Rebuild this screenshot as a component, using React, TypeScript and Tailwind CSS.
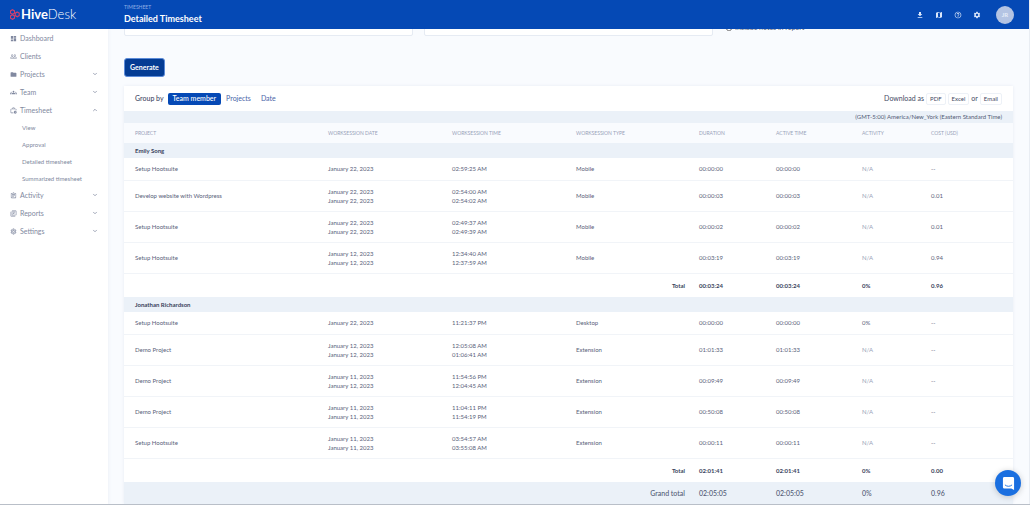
import { Fragment } from 'react'
import {
  MdDashboard,
  MdPeopleOutline,
  MdFolder,
  MdGroups,
  MdOutlineWorkHistory,
  MdOutlineAssignment,
  MdOutlineLibraryBooks,
  MdOutlineSettings,
  MdDownload,
  MdMap,
  MdHelpOutline,
  MdSettings,
} from 'react-icons/md'
import { ChevronDown, ChevronUp } from 'lucide-react'

const navItems = [
  { label: 'Dashboard', icon: MdDashboard },
  { label: 'Clients', icon: MdPeopleOutline },
  { label: 'Projects', icon: MdFolder, chevron: 'down' },
  { label: 'Team', icon: MdGroups, chevron: 'down' },
  {
    label: 'Timesheet',
    icon: MdOutlineWorkHistory,
    chevron: 'up',
    children: ['View', 'Approval', 'Detailed timesheet', 'Summarized timesheet'],
  },
  { label: 'Activity', icon: MdOutlineAssignment, chevron: 'down' },
  { label: 'Reports', icon: MdOutlineLibraryBooks, chevron: 'down' },
  { label: 'Settings', icon: MdOutlineSettings, chevron: 'down' },
]

const columns = [
  { label: 'Project', width: 'w-[193px]' },
  { label: 'Worksession date', width: 'w-[124px]' },
  { label: 'Worksession time', width: 'w-[124px]' },
  { label: 'Worksession type', width: 'w-[123px]' },
  { label: 'Duration', width: 'w-[77px]' },
  { label: 'Active time', width: 'w-[86px]' },
  { label: 'Activity', width: 'w-[69px]' },
  { label: 'Cost (USD)', width: 'w-[93px]' },
]

const groups = [
  {
    name: 'Emily Song',
    rows: [
      { project: 'Setup Hootsuite', dates: ['January 22, 2023'], times: ['02:59:25 AM'], type: 'Mobile', duration: '00:00:00', activity: 'N/A', cost: '--' },
      { project: 'Develop website with Wordpress', dates: ['January 22, 2023', 'January 22, 2023'], times: ['02:54:00 AM', '02:54:02 AM'], type: 'Mobile', duration: '00:00:03', activity: 'N/A', cost: '0.01' },
      { project: 'Setup Hootsuite', dates: ['January 22, 2023', 'January 22, 2023'], times: ['02:49:37 AM', '02:49:39 AM'], type: 'Mobile', duration: '00:00:02', activity: 'N/A', cost: '0.01' },
      { project: 'Setup Hootsuite', dates: ['January 12, 2023', 'January 12, 2023'], times: ['12:34:40 AM', '12:37:59 AM'], type: 'Mobile', duration: '00:03:19', activity: 'N/A', cost: '0.94' },
    ],
    total: { duration: '00:03:24', activity: '0%', cost: '0.96' },
  },
  {
    name: 'Jonathan Richardson',
    rows: [
      { project: 'Setup Hootsuite', dates: ['January 22, 2023'], times: ['11:21:37 PM'], type: 'Desktop', duration: '00:00:00', activity: '0%', cost: '--' },
      { project: 'Demo Project', dates: ['January 12, 2023', 'January 12, 2023'], times: ['12:05:08 AM', '01:06:41 AM'], type: 'Extension', duration: '01:01:33', activity: 'N/A', cost: '--' },
      { project: 'Demo Project', dates: ['January 11, 2023', 'January 12, 2023'], times: ['11:54:56 PM', '12:04:45 AM'], type: 'Extension', duration: '00:09:49', activity: 'N/A', cost: '--' },
      { project: 'Demo Project', dates: ['January 11, 2023', 'January 11, 2023'], times: ['11:04:11 PM', '11:54:19 PM'], type: 'Extension', duration: '00:50:08', activity: 'N/A', cost: '--' },
      { project: 'Setup Hootsuite', dates: ['January 11, 2023', 'January 11, 2023'], times: ['03:54:57 AM', '03:55:08 AM'], type: 'Extension', duration: '00:00:11', activity: 'N/A', cost: '--' },
    ],
    total: { duration: '02:01:41', activity: '0%', cost: '0.00' },
  },
]

function Logo() {
  return (
    <a href="#" className="flex w-[124px] shrink-0 items-center gap-px pl-2.5 text-[13px] leading-none text-white">
      <svg viewBox="0 0 20 22" className="h-[11px] w-[10px]" fill="none" stroke="#d5406b" strokeWidth="2.2">
        <path d="M5 1.5l4 2.3v4.6L5 10.7 1 8.4V3.8z" />
        <path d="M5 11.5l4 2.3v4.6L5 20.7l-4-2.3v-4.6z" />
        <path d="M14.5 6l4 2.3v4.9l-4 2.3-4-2.3V8.3z" />
      </svg>
      <span>
        <span className="font-bold">Hive</span>
        <span className="font-light">Desk</span>
      </span>
    </a>
  )
}

function Header() {
  return (
    <header className="relative z-10 flex h-[29px] shrink-0 items-center bg-[#0549b5] text-white">
      <Logo />
      <div className="flex-1">
        <p className="text-[5px] leading-[7px] text-[#8fb0e6] uppercase">Timesheet</p>
        <h1 className="mt-0.5 text-[9px] leading-[12px] font-bold">Detailed Timesheet</h1>
      </div>
      <div className="flex items-center gap-[11px] pr-[15px] text-[8px] text-[#dbe7fb]">
        <button aria-label="Downloads"><MdDownload /></button>
        <button aria-label="Guide"><MdMap /></button>
        <button aria-label="Help"><MdHelpOutline /></button>
        <button aria-label="Settings"><MdSettings /></button>
        <button className="ml-1 size-[18px] rounded-full bg-[#b4c4e3] text-[6px] font-bold text-[#e6edf8]">JR</button>
      </div>
    </header>
  )
}

function Sidebar() {
  return (
    <nav className="w-[108px] shrink-0 bg-white text-[7px] text-[#8189a0] shadow-[0_0_4px_#e8ecf4]">
      <ul>
        {navItems.map(({ label, icon: Icon, chevron, children }) => (
          <li key={label}>
            <a href="#" className="flex h-[18px] items-center pr-2.5 pl-2.5">
              <Icon className="mr-[3px] size-[7px]" />
              <span className="flex-1">{label}</span>
              {chevron === 'down' && <ChevronDown className="size-[6px]" strokeWidth={3} />}
              {chevron === 'up' && <ChevronUp className="size-[6px]" strokeWidth={3} />}
            </a>
            {children && (
              <ul className="-mb-px text-[6px]">
                {children.map((child) => (
                  <li key={child}>
                    <a href="#" className="flex h-[17px] items-center pl-[22px]">{child}</a>
                  </li>
                ))}
              </ul>
            )}
          </li>
        ))}
      </ul>
    </nav>
  )
}

function Filters() {
  return (
    <form className="px-4">
      <div className="-mt-2.5 flex gap-[11px]">
        <input aria-label="From" className="h-[17px] min-w-0 flex-1 rounded-xs border border-[#e6ebf3] bg-white" />
        <input aria-label="To" className="h-[17px] min-w-0 flex-1 rounded-xs border border-[#e6ebf3] bg-white" />
        <label className="flex w-[289px] items-center gap-[3px] pl-0.5 text-[7px] text-[#525b75]">
          <input type="checkbox" className="size-[6px]" />
          Include notes in report
        </label>
      </div>
      <button
        type="button"
        className="mt-[22px] h-[19px] rounded-[3px] border border-[#5c8bd8] bg-[#043c94] px-[5px] text-[7px] font-bold text-white"
      >
        Generate
      </button>
    </form>
  )
}

function Toolbar() {
  return (
    <div className="flex h-[25px] items-center justify-between pr-[11px] pl-[11px] text-[7px] text-[#3f4963]">
      <div className="flex items-center">
        <span className="mr-1 font-medium">Group by</span>
        <button className="h-[12px] rounded-xs bg-[#0549b5] px-[5px] font-medium text-white">Team member</button>
        <button className="ml-[5px] text-[#4a65a8]">Projects</button>
        <button className="ml-2.5 text-[#4a65a8]">Date</button>
      </div>
      <div className="flex items-center gap-0.5">
        <span>Download as</span>
        <button className="h-[12px] rounded-xs border border-[#edf1f7] px-[3px] text-[6px]">PDF</button>
        <button className="h-[12px] rounded-xs border border-[#edf1f7] px-[3px] text-[6px]">Excel</button>
        <span>or</span>
        <button className="h-[12px] rounded-xs border border-[#edf1f7] px-[3px] text-[6px]">Email</button>
      </div>
    </div>
  )
}

function TimesheetTable() {
  return (
    <table className="w-full table-fixed text-left text-[6px] leading-[9px] text-[#59617a]">
      <thead>
        <tr className="h-5 bg-[#f9fbfe] text-[5px] text-[#98a1b8] uppercase">
          {columns.map((col) => (
            <th key={col.label} className={`${col.width} pl-[11px] font-normal`}>{col.label}</th>
          ))}
        </tr>
      </thead>
      <tbody>
        {groups.map((group) => (
          <Fragment key={group.name}>
            <tr className="h-[15px] bg-[#ebf1f8] text-[#39435c]">
              <th colSpan={8} className="pl-[11px] font-bold">{group.name}</th>
            </tr>
            {group.rows.map((row, i) => (
              <tr key={i} className={`${row.dates.length > 1 ? 'h-[31px]' : 'h-[22px]'} border-b border-[#f1f4f8]`}>
                <td className="pl-[11px]">{row.project}</td>
                <td className="pl-[11px]">{row.dates.map((date, j) => <div key={j}>{date}</div>)}</td>
                <td className="pl-[11px]">{row.times.map((time, j) => <div key={j}>{time}</div>)}</td>
                <td className="pl-[11px]">{row.type}</td>
                <td className="pl-[11px]">{row.duration}</td>
                <td className="pl-[11px]">{row.duration}</td>
                <td className={`pl-[11px] ${row.activity === 'N/A' ? 'text-[#98a1b8]' : ''}`}>{row.activity}</td>
                <td className="pl-[11px]">{row.cost}</td>
              </tr>
            ))}
            <tr className="h-6 font-bold text-[#39435c]">
              <td colSpan={4} className="pr-[3px] text-right">Total</td>
              <td className="pl-[11px]">{group.total.duration}</td>
              <td className="pl-[11px]">{group.total.duration}</td>
              <td className="pl-[11px]">{group.total.activity}</td>
              <td className="pl-[11px]">{group.total.cost}</td>
            </tr>
          </Fragment>
        ))}
      </tbody>
      <tfoot>
        <tr className="h-[22px] bg-[#ebf1f8] text-[7px] font-medium text-[#525b75]">
          <td colSpan={4} className="pr-[3px] text-right">Grand total</td>
          <td className="pl-[11px]">02:05:05</td>
          <td className="pl-[11px]">02:05:05</td>
          <td className="pl-[11px]">0%</td>
          <td className="pl-[11px]">0.96</td>
        </tr>
      </tfoot>
    </table>
  )
}

function ChatButton() {
  return (
    <button
      aria-label="Open chat"
      className="fixed right-[9px] bottom-[9px] flex size-[26px] items-center justify-center rounded-full bg-[#1a6fe0] shadow-[0_1px_6px_#0003]"
    >
      <svg viewBox="0 0 14 16" className="h-[15px] w-[13px]">
        <path d="M2.5 1h9A1.5 1.5 0 0 1 13 2.5V15l-3-1.5H2.5A1.5 1.5 0 0 1 1 12V2.5A1.5 1.5 0 0 1 2.5 1z" fill="#fff" />
        <path d="M3.5 9.8c2 1.7 5 1.7 7 0" fill="none" stroke="#1a6fe0" strokeLinecap="round" />
      </svg>
    </button>
  )
}

export default function App() {
  return (
    <div className="flex h-screen flex-col overflow-hidden border-r border-[#e9edf3] bg-[#f9fbfe] font-['Lato',sans-serif]">
      <Header />
      <div className="flex min-h-0 flex-1">
        <Sidebar />
        <main className="min-w-0 flex-1">
          <Filters />
          <section className="mx-4 mt-[9px] bg-white shadow-[0_0_3px_#e8ecf4]">
            <Toolbar />
            <p className="h-[12px] bg-[#ebf1f8] pr-[11px] text-right text-[6px] leading-[12px] text-[#525b75]">
              (GMT-5:00) America/New_York (Eastern Standard Time)
            </p>
            <TimesheetTable />
          </section>
        </main>
      </div>
      <ChatButton />
      <div className="fixed inset-x-0 bottom-0 h-px bg-[#b9bfc8]" />
    </div>
  )
}
